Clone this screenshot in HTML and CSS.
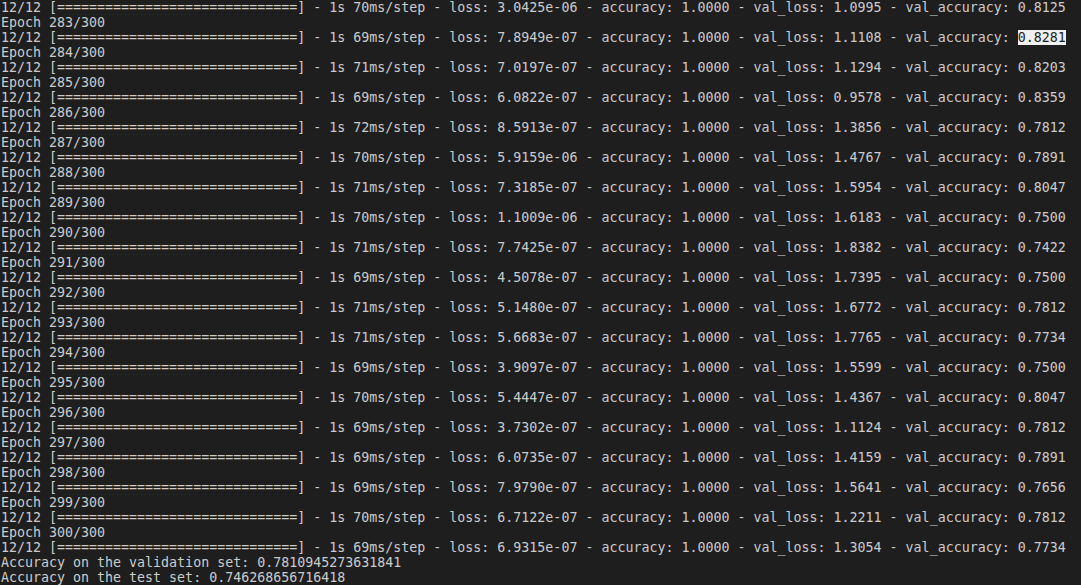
FILE: index.html
```html
<!DOCTYPE html>
<html lang="en">
<head>
    <meta charset="UTF-8">
    <title>Training log</title>
    <link rel="stylesheet" href="styles.css">
</head>
<body>
<pre class="terminal">12/12 [==============================] - 1s 70ms/step - loss: 3.0425e-06 - accuracy: 1.0000 - val_loss: 1.0995 - val_accuracy: 0.8125
Epoch 283/300
12/12 [==============================] - 1s 69ms/step - loss: 7.8949e-07 - accuracy: 1.0000 - val_loss: 1.1108 - val_accuracy: <span class="selected">0.8281</span>
Epoch 284/300
12/12 [==============================] - 1s 71ms/step - loss: 7.0197e-07 - accuracy: 1.0000 - val_loss: 1.1294 - val_accuracy: 0.8203
Epoch 285/300
12/12 [==============================] - 1s 69ms/step - loss: 6.0822e-07 - accuracy: 1.0000 - val_loss: 0.9578 - val_accuracy: 0.8359
Epoch 286/300
12/12 [==============================] - 1s 72ms/step - loss: 8.5913e-07 - accuracy: 1.0000 - val_loss: 1.3856 - val_accuracy: 0.7812
Epoch 287/300
12/12 [==============================] - 1s 70ms/step - loss: 5.9159e-06 - accuracy: 1.0000 - val_loss: 1.4767 - val_accuracy: 0.7891
Epoch 288/300
12/12 [==============================] - 1s 71ms/step - loss: 7.3185e-07 - accuracy: 1.0000 - val_loss: 1.5954 - val_accuracy: 0.8047
Epoch 289/300
12/12 [==============================] - 1s 70ms/step - loss: 1.1009e-06 - accuracy: 1.0000 - val_loss: 1.6183 - val_accuracy: 0.7500
Epoch 290/300
12/12 [==============================] - 1s 71ms/step - loss: 7.7425e-07 - accuracy: 1.0000 - val_loss: 1.8382 - val_accuracy: 0.7422
Epoch 291/300
12/12 [==============================] - 1s 69ms/step - loss: 4.5078e-07 - accuracy: 1.0000 - val_loss: 1.7395 - val_accuracy: 0.7500
Epoch 292/300
12/12 [==============================] - 1s 71ms/step - loss: 5.1480e-07 - accuracy: 1.0000 - val_loss: 1.6772 - val_accuracy: 0.7812
Epoch 293/300
12/12 [==============================] - 1s 71ms/step - loss: 5.6683e-07 - accuracy: 1.0000 - val_loss: 1.7765 - val_accuracy: 0.7734
Epoch 294/300
12/12 [==============================] - 1s 69ms/step - loss: 3.9097e-07 - accuracy: 1.0000 - val_loss: 1.5599 - val_accuracy: 0.7500
Epoch 295/300
12/12 [==============================] - 1s 70ms/step - loss: 5.4447e-07 - accuracy: 1.0000 - val_loss: 1.4367 - val_accuracy: 0.8047
Epoch 296/300
12/12 [==============================] - 1s 69ms/step - loss: 3.7302e-07 - accuracy: 1.0000 - val_loss: 1.1124 - val_accuracy: 0.7812
Epoch 297/300
12/12 [==============================] - 1s 69ms/step - loss: 6.0735e-07 - accuracy: 1.0000 - val_loss: 1.4159 - val_accuracy: 0.7891
Epoch 298/300
12/12 [==============================] - 1s 69ms/step - loss: 7.9790e-07 - accuracy: 1.0000 - val_loss: 1.5641 - val_accuracy: 0.7656
Epoch 299/300
12/12 [==============================] - 1s 70ms/step - loss: 6.7122e-07 - accuracy: 1.0000 - val_loss: 1.2211 - val_accuracy: 0.7812
Epoch 300/300
12/12 [==============================] - 1s 69ms/step - loss: 6.9315e-07 - accuracy: 1.0000 - val_loss: 1.3054 - val_accuracy: 0.7734
Accuracy on the validation set: 0.7810945273631841
Accuracy on the test set: 0.746268656716418</pre>
</body>
</html>
```

FILE: styles.css
```css
html, body {
    margin: 0;
    padding: 0;
    background: #1e1e1e;
    height: 100%;
    overflow: hidden;
}

.terminal {
    margin: 0;
    padding: 0 0 0 1px;
    font-family: "DejaVu Sans Mono", monospace;
    font-size: 13.3px;
    line-height: 15px;
    color: #cccccc;
    white-space: pre;
}

.selected {
    background: #f0f0f0;
    color: #1e1e1e;
}
```
